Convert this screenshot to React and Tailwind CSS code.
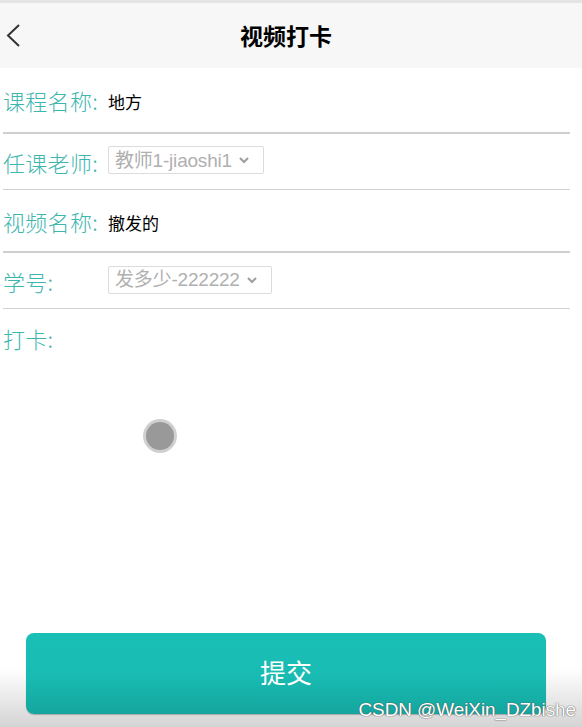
import React from "react";

const font = { fontFamily: '"Noto Sans CJK SC", "Liberation Sans", sans-serif' };

function Chevron() {
  return (
    <svg width="12" height="8" viewBox="0 0 12 8" className="ml-[6px]">
      <path d="M2 2 L6 6 L10 2" fill="none" stroke="#a0a0a0" strokeWidth="2.2" />
    </svg>
  );
}

function Label({ children }) {
  return <span className="inline-block w-[105px] text-[22px] leading-none text-[#3db6ae] font-light tracking-[0.3px]">{children}</span>;
}

function Select({ text, w }) {
  return (
    <div className={`flex items-center h-[28px] ${w} border border-[#dcdcdc] rounded-[2px] pl-[6px] bg-white`}>
      <span className="text-[19px] leading-none text-[#b0b0b0] tracking-[-0.2px]" style={{ fontFamily: '"Liberation Sans", "Noto Sans CJK SC", sans-serif' }}>{text}</span>
      <Chevron />
    </div>
  );
}

export default function App() {
  return (
    <div className="w-[582px] h-[727px] bg-white flex flex-col relative overflow-hidden" style={font}>
      <div className="h-[3px] bg-[#e4e4e4]" />
      <div className="h-[65px] bg-[#f7f7f7] flex items-center relative">
        <svg width="20" height="28" viewBox="0 0 20 28" className="absolute left-[4px] top-[19px]">
          <path d="M15 3 L4 13.5 L15 24" fill="none" stroke="#333" strokeWidth="2" />
        </svg>
        <div className="flex-1 text-center text-[23px] font-bold text-black pr-[10px]">视频打卡</div>
      </div>

      <div className="flex flex-col pl-[3px] pr-[12px]">
        <div className="h-[66px] flex items-center border-b-2 border-[#cfcfcf]">
          <Label>课程名称:</Label>
          <span className="mt-[4px] text-[17px] text-black">地方</span>
        </div>
        <div className="h-[56px] flex items-center border-b border-[#d2d2d2]">
          <Label>任课老师:</Label>
          <div className="mt-[-3px]"><Select text="教师1-jiaoshi1" w="w-[156px]" /></div>
        </div>
        <div className="h-[63px] flex items-center border-b-2 border-[#cfcfcf]">
          <Label>视频名称:</Label>
          <span className="mt-[4px] text-[17px] text-black">撤发的</span>
        </div>
        <div className="h-[56px] flex items-center border-b border-[#d2d2d2]">
          <Label>学号:</Label>
          <div className="mt-[-2px]"><Select text="发多少-222222" w="w-[164px]" /></div>
        </div>
        <div className="pt-[18px]">
          <Label>打卡:</Label>
        </div>
        <div className="mt-[66px] ml-[140px] w-[34px] h-[34px] rounded-full bg-[#d0d0d0] flex items-center justify-center">
          <div className="w-[28px] h-[28px] rounded-full bg-[#999999]" />
        </div>
      </div>

      <div className="flex-1" />
      <div className="h-[107px] bg-[linear-gradient(to_bottom,#ffffff_0%,#ffffff_45%,#d4d4d4_100%)] px-[26px] pt-[13px]">
        <div className="h-[81px] w-[520px] rounded-[8px] bg-[linear-gradient(to_bottom,#19bfb5_0%,#19bcb3_50%,#14a69e_100%)] shadow-[0_1px_1px_rgba(0,0,0,0.25)] flex items-center justify-center">
          <span className="text-[26px] text-white leading-none mt-[-4px]">提交</span>
        </div>
      </div>

      <div className="absolute right-[6px] bottom-[8px] text-[19px] text-white leading-none tracking-[-0.1px]" style={{ fontFamily: '"Liberation Sans", sans-serif', textShadow: "0 0 1px #555, 0 0 1px #555" }}>
        CSDN @WeiXin_DZbishe
      </div>
    </div>
  );
}
